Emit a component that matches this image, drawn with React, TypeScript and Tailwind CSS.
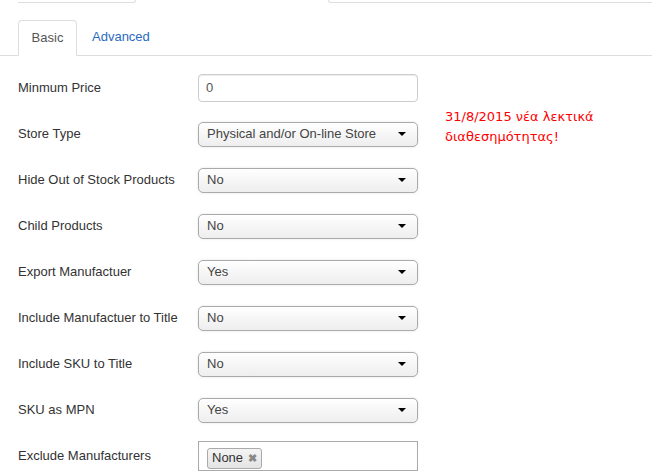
import type { ReactNode } from 'react';

interface Row {
    label: string;
    kind: 'input' | 'select' | 'tags';
    value: string;
}

const rows: Row[] = [
    { label: 'Minmum Price', kind: 'input', value: '0' },
    { label: 'Store Type', kind: 'select', value: 'Physical and/or On-line Store' },
    { label: 'Hide Out of Stock Products', kind: 'select', value: 'No' },
    { label: 'Child Products', kind: 'select', value: 'No' },
    { label: 'Export Manufactuer', kind: 'select', value: 'Yes' },
    { label: 'Include Manufactuer to Title', kind: 'select', value: 'No' },
    { label: 'Include SKU to Title', kind: 'select', value: 'No' },
    { label: 'SKU as MPN', kind: 'select', value: 'Yes' },
    { label: 'Exclude Manufacturers', kind: 'tags', value: 'None' },
];

function Control({ row }: { row: Row }) {
    if (row.kind === 'input') {
        return (
            <div className="w-[220px] h-[28px] border border-[#ccc] rounded-[4px] bg-white shadow-[inset_0_1px_1px_rgba(0,0,0,0.075)] flex items-center px-[7px] text-[13px] text-[#555]">
                {row.value}
            </div>
        );
    }

    if (row.kind === 'tags') {
        return (
            <div className="w-[220px] h-[30px] border border-[#aaa] bg-white flex items-center pl-[8px] pt-[4px]">
                <span className="flex items-center gap-[5px] h-[21px] px-[4px] border border-[#aaa] rounded-[3px] bg-gradient-to-b from-[#f4f4f4] to-[#e4e4e4] text-[13px] text-[#333]">
                    None
                    <span className="text-[#888] text-[11px] font-bold leading-none">✖</span>
                </span>
            </div>
        );
    }

    return (
        <div className="w-[220px] h-[25px] border border-[#aaa] rounded-[5px] bg-gradient-to-b from-white via-[#f6f6f6] to-[#eee] shadow-[0_0_3px_rgba(0,0,0,0.1)] flex items-center justify-between pl-[8px] pr-[11px] text-[13px] text-[#444]">
            <span>{row.value}</span>
            <span className="w-0 h-0 border-l-[4px] border-r-[4px] border-t-[4px] border-l-transparent border-r-transparent border-t-black" />
        </div>
    );
}

function FormRow({ row }: { row: Row }): ReactNode {
    return (
        <div className="flex items-center h-[46px]">
            <label className="w-[180px] text-[13px] text-[#333]">{row.label}</label>
            <Control row={row} />
        </div>
    );
}

export default function App() {
    return (
        <div className="w-[652px] h-[473px] overflow-hidden bg-white font-['Liberation_Sans',Arial,sans-serif] relative">
            {/* Cut-off boxes from above */}
            <div className="flex h-[3px]">
                <div className="ml-[18px] w-[118px] h-[3px] border-b border-r border-[#ddd] rounded-br-[3px]" />
                <div className="ml-[192px] flex-1 h-[3px] border-b border-l border-[#ddd] rounded-bl-[3px]" />
            </div>

            {/* Tabs */}
            <div className="mt-[17px] pl-[18px] flex items-end border-b border-[#ddd] h-[36px]">
                <div className="w-[59px] h-[36px] mb-[-1px] flex items-center justify-center border border-[#ddd] border-b-white rounded-t-[4px] bg-white text-[13px] text-[#555]">
                    Basic
                </div>
                <div className="h-[36px] pl-[15px] flex items-center text-[13px] text-[#2a6bbf]">
                    Advanced
                </div>
            </div>

            {/* Form */}
            <div className="flex mt-[9px]">
                <div className="pl-[18px] w-[430px]">
                    {rows.map((row) => (
                        <FormRow key={row.label} row={row} />
                    ))}
                </div>
                <div className="pt-[42px] pl-[15px] text-[13px] leading-[20px] text-[#f00] font-['DejaVu_Sans',sans-serif]">
                    <p>31/8/2015 νέα λεκτικά</p>
                    <p>διαθεσημότητας!</p>
                </div>
            </div>
        </div>
    );
}
